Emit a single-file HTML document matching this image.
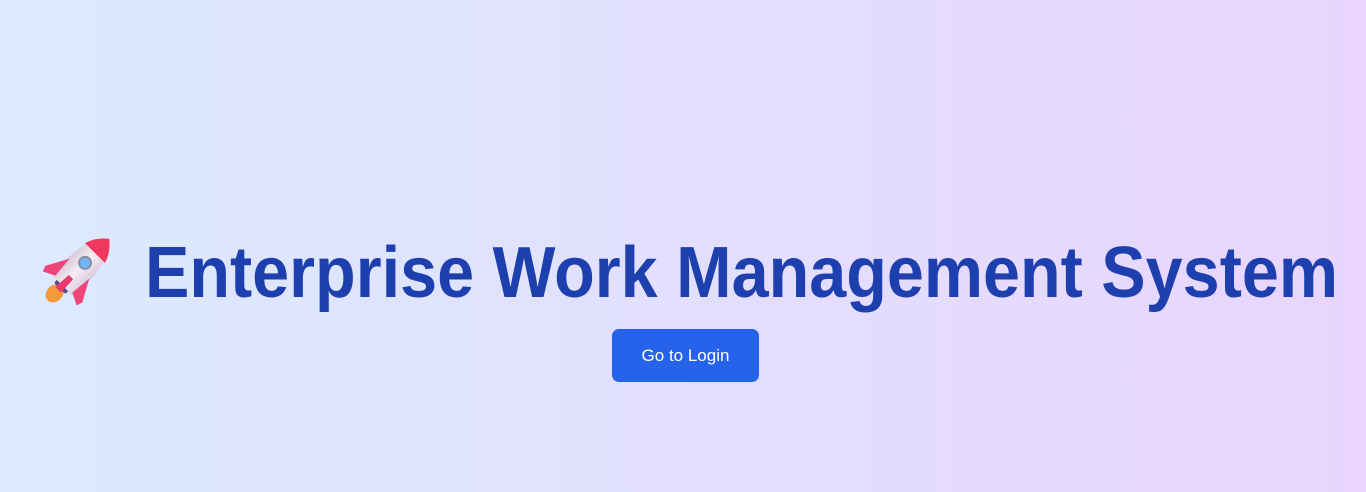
<!DOCTYPE html>
<html><head><meta charset="utf-8"><style>
html,body{margin:0;padding:0;width:1366px;height:492px;overflow:hidden}
body{background:linear-gradient(to right,#dbeafe,#e9d5ff);position:relative;font-family:"Liberation Sans",sans-serif}
svg{position:absolute;left:0;top:0}
.btn{position:absolute;left:612px;top:329px;width:147px;height:53px;background:#2563eb;border-radius:7px;color:#fff;font-size:17px;line-height:53px;text-align:center}
</style></head><body>
<svg width="1366" height="492">
  <defs>
    <linearGradient id="b" x1="0" y1="0" x2="1" y2="0"><stop offset="0" stop-color="#d8c8d6"/><stop offset="0.5" stop-color="#f6eef4"/><stop offset="1" stop-color="#d9cbe0"/></linearGradient>
  </defs>
  <g transform="translate(78,270) rotate(45)">
    <ellipse cx="0" cy="33" rx="8" ry="10" fill="#f59a3c"/>
    <rect x="-8" y="19" width="16" height="7" rx="2" fill="#5a4a8a"/>
    <path d="M0,-44 C15,-32 18,-5 14,22 L-14,22 C-18,-5 -15,-32 0,-44Z" fill="url(#b)"/>
    <path d="M0,-44 C8,-38 12,-31 14,-24 L-14,-24 C-12,-31 -8,-38 0,-44Z" fill="#f0385f"/>
    <path d="M-14,-2 L-26,20 L-24,26 L-12,20Z" fill="#f0457a"/>
    <path d="M14,-2 L26,20 L24,26 L12,20Z" fill="#f0457a"/>
    <path d="M-3,10 L3,10 L4,28 L-4,28Z" fill="#e83a6c"/>
    <circle cx="0" cy="-10" r="7" fill="#8a8fa6"/>
    <circle cx="0" cy="-10" r="5" fill="#6fb6ff"/>
  </g>
  <text x="145" y="297" textLength="1193" lengthAdjust="spacingAndGlyphs" font-family="Liberation Sans, sans-serif" font-weight="bold" font-size="72" fill="#1e40af">Enterprise Work Management System</text>
</svg>
<div class="btn">Go to Login</div>
</body></html>
